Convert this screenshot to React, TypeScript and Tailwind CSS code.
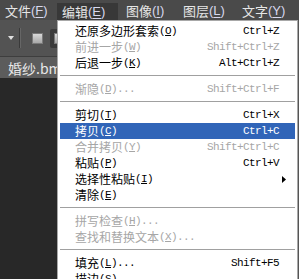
import React from "react";

const cjk = { fontFamily: '"Noto Sans CJK SC", "Noto Sans", sans-serif' };
const mono = { fontFamily: '"Liberation Mono", "DejaVu Sans Mono", monospace' };

type Item =
  | { sep: true }
  | {
      sep?: false;
      label: string;
      key: string;
      tail?: string;
      shortcut?: string;
      disabled?: boolean;
      active?: boolean;
      sub?: boolean;
    };

const items: Item[] = [
  { label: "还原多边形套索", key: "O", shortcut: "Ctrl+Z" },
  { label: "前进一步", key: "W", shortcut: "Shift+Ctrl+Z", disabled: true },
  { label: "后退一步", key: "K", shortcut: "Alt+Ctrl+Z" },
  { sep: true },
  { label: "渐隐", key: "D", tail: "...", shortcut: "Shift+Ctrl+F", disabled: true },
  { sep: true },
  { label: "剪切", key: "T", shortcut: "Ctrl+X" },
  { label: "拷贝", key: "C", shortcut: "Ctrl+C", active: true },
  { label: "合并拷贝", key: "Y", shortcut: "Shift+Ctrl+C", disabled: true },
  { label: "粘贴", key: "P", shortcut: "Ctrl+V" },
  { label: "选择性粘贴", key: "I", sub: true },
  { label: "清除", key: "E" },
  { sep: true },
  { label: "拼写检查", key: "H", tail: "...", disabled: true },
  { label: "查找和替换文本", key: "X", tail: "...", disabled: true },
  { sep: true },
  { label: "填充", key: "L", tail: "...", shortcut: "Shift+F5" },
  { label: "描边", key: "S", tail: "..." },
];

function MenuBarItem({ label, k, w, pl }: { label: string; k: string; w: string; pl: string }) {
  return (
    <div className={`${w} ${pl} h-full flex items-end pb-[1px]`}>
      <div className="h-[17px] flex items-center">
        <span className="text-[13px] leading-none text-[#e6e6e6]" style={cjk}>
          {label}
        </span>
        <span className="text-[13px] leading-none text-[#d8d8ee]" style={{ fontFamily: '"Liberation Sans", Arial, sans-serif' }}>
          (<span className="underline underline-offset-2">{k}</span>)
        </span>
      </div>
    </div>
  );
}

export default function App() {
  return (
    <div className="relative w-[299px] h-[279px] overflow-hidden bg-[#282828]">
      {/* menu bar */}
      <div className="h-[20px] bg-[#4a4a4a] flex">
        <MenuBarItem label="文件" k="F" w="w-[57px]" pl="pl-[5px]" />
        <div className="w-[61px] h-full flex flex-col">
          <div className="h-[3px]" />
          <div className="flex-1 bg-[#383838] pl-[5px] flex items-center">
            <span className="text-[13px] leading-none text-[#e6e6e6]" style={cjk}>
              编辑
            </span>
            <span className="text-[13px] leading-none text-[#d8d8ee]" style={{ fontFamily: '"Liberation Sans", Arial, sans-serif' }}>
              (<span className="underline underline-offset-2">E</span>)
            </span>
          </div>
        </div>
        <MenuBarItem label="图像" k="I" w="w-[57px]" pl="pl-[8px]" />
        <MenuBarItem label="图层" k="L" w="w-[59px]" pl="pl-[8px]" />
        <MenuBarItem label="文字" k="Y" w="w-[60px]" pl="pl-[8px]" />
      </div>

      {/* options toolbar */}
      <div className="h-[37px] bg-[#535353] flex items-center border-b border-[#3e3e3e]">
        <div className="w-[19px] flex justify-center pl-[3px]">
          <svg width="6" height="4" viewBox="0 0 6 4">
            <path d="M0 0 H6 L3 4 Z" fill="#e0e0e0" />
          </svg>
        </div>
        <div className="w-[1px] h-[20px] bg-[#3a3a3a]" />
        <div className="w-[1px] h-[20px] bg-[#666666]" />
        <div className="ml-[11px] w-[11px] h-[11px] border border-[#7a7a7a] bg-gradient-to-b from-[#d8d8d8] to-[#a8a8a8]" />
        <div className="ml-[7px] w-[14px] h-[19px] rounded-[2px] bg-[#3a3a3a] flex items-center pl-[4px]">
          <div className="w-[8px] h-[11px] border border-[#7a7a7a] bg-gradient-to-b from-[#d8d8d8] to-[#a8a8a8]" />
        </div>
      </div>

      {/* document tab */}
      <div className="h-[21px] bg-[#454545] flex">
        <div className="w-[80px] h-full bg-[#5c5c5c] pl-[8px] flex items-center">
          <span className="text-[14px] leading-none text-[#e8e8e8]" style={cjk}>
            婚纱.bmp
          </span>
        </div>
      </div>

      {/* dropdown menu */}
      <div className="absolute left-[57px] top-[20px] w-[241px] h-[270px] bg-white border-l border-t border-r border-[#a8a8a8] px-[2px] pt-[2px] shadow-[1px_1px_0_#555]">
        {items.map((it, i) =>
          it.sep ? (
            <div key={i} className="h-[10px] flex flex-col justify-center">
              <div className="h-[1px] bg-[#a0a0a0]" />
              <div className="h-[1px] bg-white" />
            </div>
          ) : (
            <div
              key={i}
              className={`h-[16px] flex items-center pl-[15px] pr-[16px] ${
                it.active ? "bg-[#3165b8] text-white" : it.disabled ? "text-[#a6a6a6]" : "text-black"
              }`}
            >
              <span className="text-[12px] leading-none" style={cjk}>
                {it.label}
              </span>
              <span className="text-[11px] leading-none tracking-[-0.6px]" style={mono}>
                (<span className="underline underline-offset-1">{it.key}</span>){it.tail ?? ""}
              </span>
              <span className="flex-1" />
              {it.shortcut && (
                <span className="text-[11px] leading-none tracking-[-0.6px]" style={mono}>
                  {it.shortcut}
                </span>
              )}
              {it.sub && (
                <svg width="4" height="7" viewBox="0 0 4 7" className="mr-[-7px]">
                  <path d="M0 0 L4 3.5 L0 7 Z" fill="#000" />
                </svg>
              )}
            </div>
          )
        )}
      </div>
    </div>
  );
}
